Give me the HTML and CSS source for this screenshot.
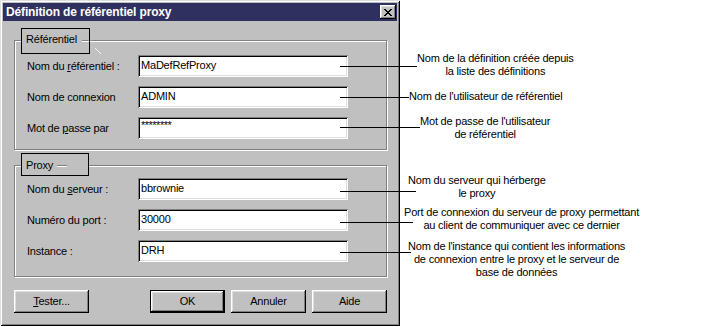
FILE: index.html
```html
<!DOCTYPE html>
<html lang="fr">
<head>
<meta charset="utf-8">
<title>Définition de référentiel proxy</title>
<link rel="stylesheet" href="styles.css">
</head>
<body>
<div class="dialog">
  <div class="titlebar">
    <span class="title">Définition de référentiel proxy</span>
    <button class="close" aria-label="Fermer">
      <svg width="8" height="7" viewBox="0 0 8 7" shape-rendering="crispEdges"><path d="M0 0h2v1h-2zM6 0h2v1h-2zM1 1h2v1h-2zM5 1h2v1h-2zM2 2h4v1h-4zM3 3h2v1h-2zM2 4h4v1h-4zM1 5h2v1h-2zM5 5h2v1h-2zM0 6h2v1h-2zM6 6h2v1h-2z" fill="#000"/></svg>
    </button>
  </div>

  <section class="group group-ref">
    <span class="legend legend-ref">Référentiel</span>
    <svg class="scratch" width="6" height="6" viewBox="0 0 6 6"><path d="M0 0L6 6" stroke="#f4f4f4" stroke-width="1"/></svg>
    <div class="row">
      <span class="label">Nom du <u>r</u>éférentiel :</span>
      <div class="field">MaDefRefProxy
        <div class="callout co1"><span class="leader"></span><p class="note">Nom de la définition créée depuis<br>la liste des définitions</p></div>
      </div>
    </div>
    <div class="row">
      <span class="label">Nom de connexion</span>
      <div class="field">ADMIN
        <div class="callout co2"><span class="leader"></span><p class="note">Nom de l'utilisateur de référentiel</p></div>
      </div>
    </div>
    <div class="row">
      <span class="label">Mot de <u>p</u>asse par</span>
      <div class="field pw">********
        <div class="callout co3"><span class="leader"></span><p class="note">Mot de passe de l'utilisateur<br>de référentiel</p></div>
      </div>
    </div>
  </section>

  <section class="group group-proxy">
    <span class="legend legend-proxy">Proxy</span>
    <div class="row">
      <span class="label">Nom du <u>s</u>erveur :</span>
      <div class="field">bbrownie
        <div class="callout co4"><span class="leader"></span><p class="note">Nom du serveur qui hérberge<br>le proxy</p></div>
      </div>
    </div>
    <div class="row">
      <span class="label">Numéro du port :</span>
      <div class="field">30000
        <div class="callout co5"><span class="leader"></span><p class="note">Port de connexion du serveur de proxy permettant<br>au client de communiquer avec ce dernier</p></div>
      </div>
    </div>
    <div class="row">
      <span class="label">Instance :</span>
      <div class="field">DRH
        <div class="callout co6"><span class="leader"></span><p class="note">Nom de l'instance qui contient les informations<br>de connexion entre le proxy et le serveur de<br>base de données</p></div>
      </div>
    </div>
  </section>

  <div class="buttons">
    <button class="btn"><u>T</u>ester...</button>
    <div class="btn-group">
      <button class="btn btn-default">OK</button>
      <button class="btn">Annuler</button>
      <button class="btn">Aide</button>
    </div>
  </div>
</div>
</body>
</html>
```
FILE: styles.css
```css
* { box-sizing: border-box; }

body {
  margin: 0;
  background: #fff;
  color: #000;
  font: 11px/13px "Liberation Sans", Arial, sans-serif;
  letter-spacing: -0.2px;
}

.dialog {
  position: relative;
  width: 400px;
  height: 326px;
  padding: 3px;
  background: #c0c0c0;
  display: flex;
  flex-direction: column;
  box-shadow: inset 1px 1px #dfdfdf, inset -1px -1px #000, inset 2px 2px #fff, inset -2px -2px #808080;
}

.titlebar {
  height: 18px;
  flex: none;
  background: #303060;
  display: flex;
  align-items: center;
  justify-content: space-between;
  padding: 0 1px 0 3px;
}

.title {
  color: #fff;
  font-weight: bold;
  font-size: 12px;
  letter-spacing: -0.15px;
}

.close {
  width: 16px;
  height: 14px;
  padding: 0;
  border: 0;
  background: #c0c0c0;
  display: flex;
  align-items: center;
  justify-content: center;
  box-shadow: inset -1px -1px #000, inset 1px 1px #fff, inset -2px -2px #808080, inset 2px 2px #dfdfdf;
}

.group {
  position: relative;
  flex: none;
  margin: 0 10px 0 11px;
  border: 1px solid #808080;
  box-shadow: inset 1px 1px #fff, 1px 1px #fff;
  display: flex;
  flex-direction: column;
  gap: 9px;
}

.group-ref { margin-top: 19px; padding: 14px 0 10px 12px; }
.group-proxy { margin-top: 15px; padding: 12px 0 14px 12px; }

.legend {
  position: absolute;
  left: 6px;
  top: -13px;
  border: 1px solid #000;
  background: #c0c0c0;
  padding: 4px 0 0 4px;
}
.legend::after {
  content: "";
  position: absolute;
  top: 11px;
  height: 1px;
  background: #808080;
  box-shadow: 0 1px #fff;
}
.legend-ref { width: 69px; height: 26px; }
.legend-ref::after { left: 60px; width: 7px; }
.legend-proxy { width: 68px; height: 23px; padding-top: 5px; }
.legend-proxy::after { left: 35px; width: 10px; top: 11px; }

.scratch {
  position: absolute;
  left: 80px;
  top: 7px;
}

.row {
  display: flex;
  align-items: center;
  height: 22px;
}

.label { width: 111px; }

.field {
  position: relative;
  width: 210px;
  height: 22px;
  background: #fff;
  padding: 4px 0 0 3px;
  white-space: nowrap;
  box-shadow: inset 1px 1px #808080, inset -1px -1px #fff, inset 2px 2px #000, inset -2px -2px #dfdfdf;
}
.pw { padding-top: 2px; letter-spacing: -0.5px; }

.callout {
  position: absolute;
  left: 202px;
  height: 0;
  letter-spacing: -0.2px;
}
.leader {
  position: absolute;
  left: 0;
  top: 0;
  height: 1px;
  background: #000;
}
.note {
  position: absolute;
  margin: 0;
  white-space: nowrap;
  text-align: center;
}

.co1 { top: 11px; }
.co1 .leader { width: 77px; }
.co1 .note { left: 77px; top: -14px; }

.co2 { top: 11px; }
.co2 .leader { width: 69px; }
.co2 .note { left: 69px; top: -7px; }

.co3 { top: 10px; }
.co3 .leader { width: 80px; }
.co3 .note { left: 80px; top: -12px; }

.co4 { top: 13px; }
.co4 .leader { width: 76px; }
.co4 .note { left: 68px; top: -17px; }

.co5 { top: 13px; }
.co5 .leader { width: 73px; }
.co5 .note { left: 64px; top: -16px; }

.co6 { top: 12px; }
.co6 .leader { width: 71px; }
.co6 .note { left: 68px; top: -12px; }

.buttons {
  flex: none;
  display: flex;
  justify-content: space-between;
  margin: 13px 10px 0 11px;
}
.btn-group {
  display: flex;
  gap: 6px;
}
.btn {
  width: 75px;
  height: 23px;
  padding: 0;
  border: 0;
  background: #c0c0c0;
  color: #000;
  font: inherit;
  letter-spacing: inherit;
  box-shadow: inset -1px -1px #000, inset 1px 1px #fff, inset -2px -2px #808080, inset 2px 2px #dfdfdf;
}
.btn-default {
  box-shadow: inset 0 0 0 1px #000, inset -2px -2px #000, inset 2px 2px #fff, inset -3px -3px #808080, inset 3px 3px #dfdfdf;
}
```
